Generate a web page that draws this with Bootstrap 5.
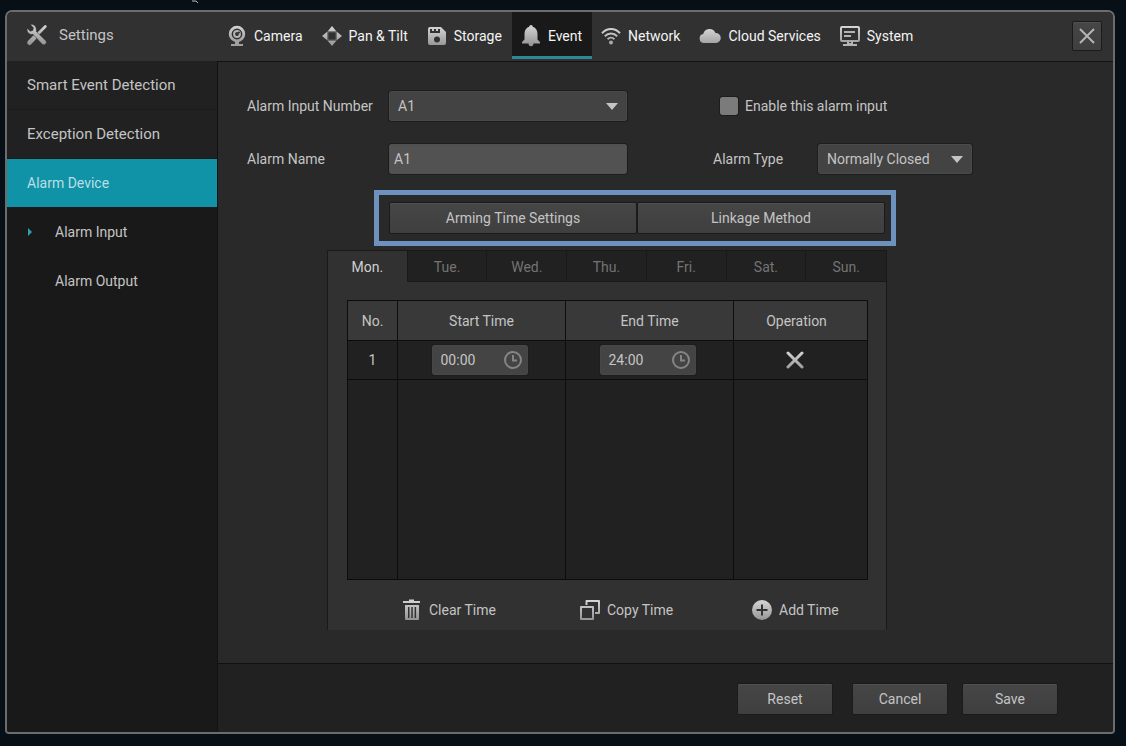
<!DOCTYPE html>
<html lang="en" data-bs-theme="dark">
<head>
<meta charset="utf-8">
<meta name="viewport" content="width=device-width, initial-scale=1">
<title>Settings</title>
<link href="https://cdn.jsdelivr.net/npm/bootstrap@5.3.0/dist/css/bootstrap.min.css" rel="stylesheet">
<style>
  body { background: #070f17; color: #c4c4c4; font: 14px/20px Roboto, sans-serif; padding: 10px 11px 12px 5px; }
  .pointer-mark { position: absolute; left: 191px; top: 0; }
  .window-frame { border: 2px solid #6c6c6c; border-radius: 7px 7px 4px 4px; background: #292929; overflow: hidden; }
  .top-bar { background: #313131; height: 50px; border-bottom: 1px solid #121212; }
  .brand-area { width: 211px; padding: 0 0 4px 19px; gap: 11px; font-size: 15px; }
  .main-tabs .nav-link { color: #f4f4f4; padding: 4px 10px 0 9px; gap: 7px; height: 47px; border-bottom: 3px solid transparent; white-space: nowrap; }
  .main-tabs .nav-link.active { background: #191919; border-bottom-color: #2f8795; }
  .btn-dark-ui { --bs-btn-font-size: 14px; --bs-btn-line-height: 20px; --bs-btn-padding-y: 4px; --bs-btn-border-radius: 2px;
    --bs-btn-color: #c4c4c4; --bs-btn-border-color: #1b1b1b; --bs-btn-hover-color: #fff; --bs-btn-hover-bg: #4a4a4a;
    background: linear-gradient(#464646, #3f3f3f); box-shadow: inset 0 1px #505050; height: 32px; }
  .close-btn { width: 30px; height: 30px; margin: 0 11px 2px 0; }
  .side-nav { width: 211px; margin-top: -1px; background: #191919; border-right: 1px solid #121212; }
  .side-nav .nav-link { color: #c4c4c4; height: 49px; padding: 0 20px; display: flex; align-items: center; }
  .side-nav .top-level { background: #212121; border-bottom: 1px solid #1c1c1c; font-size: 15px; }
  .side-nav .top-level.active { background: #1193a7; border-color: #1193a7; color: #b9dfe4; font-size: 14px; height: 48px; }
  .side-nav .sub-level { gap: 22px; }
  .content-area { padding: 29px 20px 32px 29px; }
  .form-line { min-height: 30px; }
  .form-rows { gap: 23px; margin-bottom: 16px; }
  .label-col { width: 142px; }
  .field-col { width: 238px; }
  .type-label { width: 105px; margin-left: 86px; }
  .type-col { width: 154px; }
  .dark-field { color: #c4c4c4; font-size: 14px; line-height: 20px; height: 30px; border: 1px solid #505050; border-radius: 2px; outline: 1px solid #1d1d1d; padding: 4px 8px; }
  select.dark-field { background: #434343 url("data:image/svg+xml,%3csvg xmlns='http://www.w3.org/2000/svg' viewBox='0 0 12 7'%3e%3cpath fill='%23c4c4c4' d='M0 0h12L6 7z'/%3e%3c/svg%3e") right 8px center / 12px 7px no-repeat; border-color: #4a4a4a; padding-right: 24px; }
  input.dark-field, input.dark-field:focus { background: #525252; color: #c4c4c4; padding-left: 4px; }
  .enable-check { margin-left: 93px; gap: 7px; }
  .enable-check .form-check-input { width: 18px; height: 18px; margin: 0; border-radius: 2px; background-color: #7b7b7b; border: 0; outline: 1px solid #1d1d1d; }
  .callout-box { width: 522px; border: 5px solid #6e92be; padding: 7px 6px 7px 10px; margin-left: 127px; }
  .schedule { width: 560px; margin: 4px 0 0 80px; background: #313131; border: solid #191919; border-width: 1px 1px 0; }
  .day-tabs .nav-link { color: #747474; background: #212121; border: solid #191919; border-width: 0 1px 1px 0; height: 31px; padding: 2px 0 0; border-radius: 0; }
  .day-tabs .nav-link.active { color: #cfcfcf; background: #313131; border-bottom-color: #313131; }
  .day-tabs .nav-item:last-child .nav-link { border-right: 0; }
  .times { height: 280px; margin: 18px 0 0 19px; width: 520px; table-layout: fixed; border-collapse: collapse; }
  .times th, .times td { border: 1px solid #0c0c0c; padding: 0; font-weight: 400; text-align: center; vertical-align: middle; }
  .times th { background: #393939; height: 40px; }
  .times td { background: #212121; height: 39px; }
  .times td.time-cell { padding-right: 4px; }
  .times td.delete-cell { padding-right: 12px; }
  .times .blank-row td { height: 200px; }
  .time-box { width: 96px; position: relative; margin: 0 auto; }
  .time-box input.dark-field { background: #444; border-color: #474747; padding-left: 8px; }
  .time-box svg { position: absolute; right: 6px; top: 6px; }
  .icon-btn { background: none; border: 0; padding: 0; color: #c4c4c4; }
  .actions { display: grid; grid-template-columns: 178px 172px auto; padding: 18px 0 9px 74px; height: 50px; }
  .actions .icon-btn { gap: 7px; display: flex; align-items: center; height: 24px; }
  .footer-bar { background: #212121; border-top: 1px solid #111; padding: 19px 55px 17px 20px; gap: 14px; }
  .footer-bar .btn { width: 96px; }
  .footer-bar .reset-btn { margin-right: 5px; }
</style>
</head>
<body class="min-vh-100 d-flex">
<svg class="pointer-mark" width="8" height="4" viewBox="0 0 8 4" aria-hidden="true"><path d="M2 0v2M3 1h2l2 2" stroke="#b8bcc0" fill="none"/></svg>

<svg width="0" height="0" class="position-absolute" aria-hidden="true">
  <defs>
    <linearGradient id="metal" gradientUnits="userSpaceOnUse" x1="0" y1="0" x2="0" y2="20"><stop stop-color="#d6d6d6"/><stop offset="1" stop-color="#959595"/></linearGradient>
    <symbol id="clock" viewBox="0 0 18 18"><circle cx="9" cy="9" r="8" fill="none" stroke="#858585" stroke-width="2"/><path d="M9 4v5.500h4" fill="none" stroke="#858585" stroke-width="2"/></symbol>
  </defs>
</svg>

<div class="window-frame flex-grow-1 d-flex flex-column">
  <header class="top-bar d-flex align-items-center">
    <div class="brand-area d-flex align-items-center flex-shrink-0">
      <svg width="22" height="22" viewBox="0 0 22 22" aria-hidden="true"><path d="M8 14 19.300 2.500" stroke="url(#metal)" stroke-width="2.800" stroke-linecap="round"/><path d="M3.500 18.700 8.500 13.500" stroke="url(#metal)" stroke-width="4.600" stroke-linecap="round"/><path d="M4.500.8 7.500 3.800 6.800 6.400 4.200 7.200 1.200 4.300C.5 8 3 11 7 10.300L16.200 20.200c2.300 2 5.500-1 3.600-3.400L10.300 7.500C11 3 8-.2 4.500.8z" fill="url(#metal)" stroke="#313131" stroke-width=".5"/></svg>
      <span>Settings</span>
    </div>
    <nav class="flex-grow-1 align-self-start">
      <ul class="nav main-tabs flex-nowrap">
        <li class="nav-item"><a class="nav-link d-flex align-items-center" href="#"><svg width="20" height="22" viewBox="0 0 20 22" aria-hidden="true"><circle cx="10" cy="9" r="6.800" fill="none" stroke="url(#metal)" stroke-width="2.800"/><circle cx="10" cy="9" r="3.900" fill="#b5b5b5"/><circle cx="10" cy="9" r="1.900" fill="#313131"/><circle cx="12" cy="7.500" r="1" fill="#313131"/><path d="M8 16h4v3h4v2H4v-2h4z" fill="#a0a0a0"/></svg>Camera</a></li>
        <li class="nav-item"><a class="nav-link d-flex align-items-center" href="#"><svg width="20" height="20" viewBox="0 0 20 20" aria-hidden="true"><path d="M10 0l4.500 5.500h-9zM10 20l4.500-5.500h-9zM0 10l5.500-4.500v9zM20 10l-5.500-4.500v9z" fill="url(#metal)"/><path d="M6 6h8v8H6z" fill="#313131" stroke="#777" stroke-width=".7"/></svg>Pan &amp; Tilt</a></li>
        <li class="nav-item"><a class="nav-link d-flex align-items-center" href="#"><svg width="20" height="20" viewBox="0 0 20 20" aria-hidden="true"><path fill-rule="evenodd" d="M3 1h11l5 5v11a2 2 0 0 1-2 2H3a2 2 0 0 1-2-2V3a2 2 0 0 1 2-2zM3 3v4h10V3h-2v2H9V3H7v2H5V3zM10 10.500a3 3 0 1 0 0 6 3 3 0 0 0 0-6z" fill="url(#metal)"/></svg>Storage</a></li>
        <li class="nav-item"><a class="nav-link active d-flex align-items-center" href="#" aria-current="page"><svg width="20" height="22" viewBox="0 0 20 22" aria-hidden="true"><path d="M10 0c1 0 1.700.700 1.800 1.800C15 2.700 16.500 5.500 16.500 9v5.500L19 17v1.500H1V17l2.500-2.500V9c0-3.500 1.500-6.300 4.700-7.200C8.300.7 9 0 10 0zM7.500 18.300h5a2.500 3 0 0 1-5 0z" fill="url(#metal)"/></svg>Event</a></li>
        <li class="nav-item"><a class="nav-link d-flex align-items-center" href="#"><svg width="20" height="18" viewBox="0 0 20 18" aria-hidden="true"><g fill="none" stroke="url(#metal)" stroke-width="2"><path d="M1 6.200C6.200.7 13.800.7 19 6.200"/><path d="M3.800 9.300c3.500-3.800 8.900-3.800 12.400 0"/><path d="M6.600 12.200c2-2 4.800-2 6.800 0"/></g><circle cx="10" cy="15.500" r="2" fill="#a8a8a8"/></svg>Network</a></li>
        <li class="nav-item"><a class="nav-link d-flex align-items-center" href="#"><svg width="22" height="16" viewBox="0 0 22 16" aria-hidden="true"><path d="M5 15a4.500 4.500 0 0 1-.8-8.900A6.500 6.500 0 0 1 16.500 5a5 5 0 0 1 .5 10z" fill="url(#metal)"/></svg>Cloud Services</a></li>
        <li class="nav-item"><a class="nav-link d-flex align-items-center" href="#"><svg width="20" height="20" viewBox="0 0 20 20" aria-hidden="true"><rect x="1" y="1" width="18" height="14" rx="1" fill="none" stroke="url(#metal)" stroke-width="2"/><path d="M4 5h11v2H4zM4 9h7v2H4zM7 15h2v2h2v-2h2v3h4v2H3v-2h4z" fill="#b4b4b4"/></svg>System</a></li>
      </ul>
    </nav>
    <button type="button" class="btn btn-dark-ui close-btn p-0 d-flex align-items-center justify-content-center flex-shrink-0" aria-label="Close"><svg width="16" height="16" viewBox="0 0 16 16"><path d="M1 1l14 14M15 1 1 15" stroke="#b4b4b4" stroke-width="2"/></svg></button>
  </header>

  <div class="d-flex flex-grow-1">
    <nav class="side-nav nav flex-column flex-nowrap flex-shrink-0">
      <a class="nav-link top-level" href="#">Smart Event Detection</a>
      <a class="nav-link top-level" href="#">Exception Detection</a>
      <a class="nav-link top-level active" href="#">Alarm Device</a>
      <a class="nav-link sub-level" href="#" aria-current="page"><svg width="6" height="8" viewBox="0 0 6 8" aria-hidden="true"><path d="M1 0l4 4-4 4z" fill="#2ea0b0"/></svg>Alarm Input</a>
      <a class="nav-link sub-level" href="#"><svg width="6" height="8" aria-hidden="true"></svg>Alarm Output</a>
    </nav>

    <div class="flex-grow-1 d-flex flex-column">
      <main class="content-area flex-grow-1">
        <div class="form-rows d-flex flex-column">
          <div class="form-line d-flex align-items-center">
            <label class="label-col" for="inputNumber">Alarm Input Number</label>
            <div class="field-col"><select id="inputNumber" class="form-select dark-field"><option>A1</option></select></div>
            <div class="enable-check d-flex align-items-center">
              <input class="form-check-input" type="checkbox" id="enableAlarm">
              <label for="enableAlarm">Enable this alarm input</label>
            </div>
          </div>
          <div class="form-line d-flex align-items-center">
            <label class="label-col" for="alarmName">Alarm Name</label>
            <div class="field-col"><input id="alarmName" type="text" class="form-control dark-field" value="A1"></div>
            <label class="type-label" for="alarmType">Alarm Type</label>
            <div class="type-col"><select id="alarmType" class="form-select dark-field"><option>Normally Closed</option></select></div>
          </div>
        </div>

        <div class="callout-box d-flex">
          <button type="button" class="btn btn-dark-ui flex-fill w-50">Arming Time Settings</button>
          <button type="button" class="btn btn-dark-ui flex-fill w-50">Linkage Method</button>
        </div>

        <section class="schedule">
          <ul class="nav nav-fill day-tabs flex-nowrap">
            <li class="nav-item w-100"><button type="button" class="nav-link active w-100">Mon.</button></li>
            <li class="nav-item w-100"><button type="button" class="nav-link w-100">Tue.</button></li>
            <li class="nav-item w-100"><button type="button" class="nav-link w-100">Wed.</button></li>
            <li class="nav-item w-100"><button type="button" class="nav-link w-100">Thu.</button></li>
            <li class="nav-item w-100"><button type="button" class="nav-link w-100">Fri.</button></li>
            <li class="nav-item w-100"><button type="button" class="nav-link w-100">Sat.</button></li>
            <li class="nav-item w-100"><button type="button" class="nav-link w-100">Sun.</button></li>
          </ul>
          <table class="times">
            <colgroup><col style="width:50px"><col style="width:168px"><col style="width:168px"><col style="width:134px"></colgroup>
            <thead><tr><th scope="col">No.</th><th scope="col">Start Time</th><th scope="col">End Time</th><th scope="col" class="pe-2">Operation</th></tr></thead>
            <tbody>
              <tr>
                <td>1</td>
                <td class="time-cell"><div class="time-box"><input type="text" class="form-control dark-field" value="00:00" aria-label="Start time"><svg width="18" height="18" aria-hidden="true"><use href="#clock"/></svg></div></td>
                <td class="time-cell"><div class="time-box"><input type="text" class="form-control dark-field" value="24:00" aria-label="End time"><svg width="18" height="18" aria-hidden="true"><use href="#clock"/></svg></div></td>
                <td class="delete-cell"><button type="button" class="icon-btn d-flex mx-auto" aria-label="Delete"><svg width="18" height="18" viewBox="0 0 18 18"><path d="M2 2l14 14M16 2 2 16" stroke="url(#metal)" stroke-width="3" stroke-linecap="round"/></svg></button></td>
              </tr>
              <tr class="blank-row"><td></td><td></td><td></td><td></td></tr>
            </tbody>
          </table>
          <div class="actions">
            <button type="button" class="icon-btn"><svg width="20" height="22" viewBox="0 0 20 22" aria-hidden="true"><path fill-rule="evenodd" d="M1 2h6V.5h5V2h6v2H1zM3 6h14v14q0 1-1 1H4q-1 0-1-1zM6 8v11h1.500V8zM9.300 8v11h1.500V8zM12.600 8v11h1.500V8z" fill="url(#metal)"/></svg>Clear Time</button>
            <button type="button" class="icon-btn"><svg width="20" height="20" viewBox="0 0 20 20" aria-hidden="true"><path d="M6.500 5V1H19v12h-4M1 7h12v12H1z" fill="none" stroke="url(#metal)" stroke-width="2" stroke-linejoin="round"/></svg>Copy Time</button>
            <button type="button" class="icon-btn"><svg width="20" height="20" viewBox="0 0 20 20" aria-hidden="true"><circle cx="10" cy="10" r="10" fill="url(#metal)"/><path d="M10 4.500v11M4.500 10h11" stroke="#313131" stroke-width="2"/></svg>Add Time</button>
          </div>
        </section>
      </main>
      <footer class="footer-bar d-flex justify-content-end">
        <button type="button" class="btn btn-dark-ui reset-btn">Reset</button>
        <button type="button" class="btn btn-dark-ui">Cancel</button>
        <button type="button" class="btn btn-dark-ui">Save</button>
      </footer>
    </div>
  </div>
</div>
<script src="https://cdn.jsdelivr.net/npm/bootstrap@5.3.0/dist/js/bootstrap.bundle.min.js"></script>
</body>
</html>
